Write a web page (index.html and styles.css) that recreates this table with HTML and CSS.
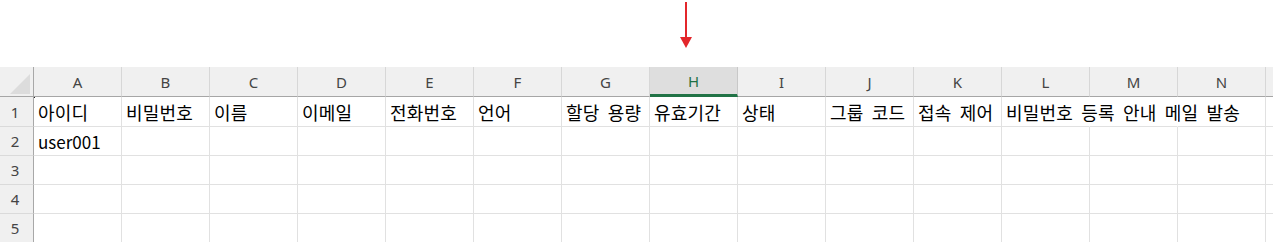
FILE: index.html
```html
<!DOCTYPE html>
<html lang="ko">
<head>
<meta charset="utf-8">
<link rel="stylesheet" href="styles.css">
</head>
<body>
<div class="top">
  <svg class="arrow" width="14" height="50" viewBox="0 0 14 50">
    <rect x="6" y="2" width="2" height="37" fill="#e3262b"/>
    <polygon points="1,37 13,37 7,48" fill="#e3262b"/>
  </svg>
</div>
<div class="sheet">
  <div class="row head">
    <div class="rn corner"><svg width="33" height="29" viewBox="0 0 33 29"><polygon points="30,7 30,27 10,27" fill="#dcdcdc"/></svg></div>
    <div class="c">A</div><div class="c">B</div><div class="c">C</div><div class="c">D</div><div class="c">E</div><div class="c">F</div><div class="c">G</div><div class="c sel">H</div><div class="c">I</div><div class="c">J</div><div class="c">K</div><div class="c">L</div><div class="c">M</div><div class="c">N</div><div class="c rest"></div>
  </div>
  <div class="row r1">
    <div class="rn">1</div>
    <div class="c"><span class="mark"></span>아이디</div><div class="c">비밀번호</div><div class="c">이름</div><div class="c">이메일</div><div class="c">전화번호</div><div class="c">언어</div><div class="c">할당 용량</div><div class="c">유효기간</div><div class="c">상태</div><div class="c">그룹 코드</div><div class="c">접속 제어</div><div class="c nb">비밀번호 등록 안내 메일 발송</div><div class="c nb"></div><div class="c"></div><div class="c rest"></div>
  </div>
  <div class="row">
    <div class="rn">2</div>
    <div class="c"><span class="latin">user001</span></div><div class="c"></div><div class="c"></div><div class="c"></div><div class="c"></div><div class="c"></div><div class="c"></div><div class="c"></div><div class="c"></div><div class="c"></div><div class="c"></div><div class="c"></div><div class="c"></div><div class="c"></div><div class="c rest"></div>
  </div>
  <div class="row">
    <div class="rn">3</div>
    <div class="c"></div><div class="c"></div><div class="c"></div><div class="c"></div><div class="c"></div><div class="c"></div><div class="c"></div><div class="c"></div><div class="c"></div><div class="c"></div><div class="c"></div><div class="c"></div><div class="c"></div><div class="c"></div><div class="c rest"></div>
  </div>
  <div class="row">
    <div class="rn">4</div>
    <div class="c"></div><div class="c"></div><div class="c"></div><div class="c"></div><div class="c"></div><div class="c"></div><div class="c"></div><div class="c"></div><div class="c"></div><div class="c"></div><div class="c"></div><div class="c"></div><div class="c"></div><div class="c"></div><div class="c rest"></div>
  </div>
  <div class="row">
    <div class="rn">5</div>
    <div class="c"></div><div class="c"></div><div class="c"></div><div class="c"></div><div class="c"></div><div class="c"></div><div class="c"></div><div class="c"></div><div class="c"></div><div class="c"></div><div class="c"></div><div class="c"></div><div class="c"></div><div class="c"></div><div class="c rest"></div>
  </div>
</div>
</body>
</html>
```
FILE: styles.css
```css
html, body {
  margin: 0;
  padding: 0;
  background: #ffffff;
  overflow: hidden;
}
body {
  width: 1273px;
  height: 242px;
  font-family: "Noto Sans CJK KR", "Noto Sans", sans-serif;
}
.top {
  height: 67px;
  display: flex;
  align-items: flex-start;
  padding-left: 679px;
  box-sizing: border-box;
}
.arrow {
  display: block;
}
.sheet {
  display: flex;
  flex-direction: column;
}
.row {
  display: flex;
  height: 29px;
  box-sizing: border-box;
}
.row.head {
  height: 30px;
}
.row.r1 {
  height: 30px;
}
.rn {
  width: 34px;
  flex: none;
  box-sizing: border-box;
  background: #f0f0f0;
  border-right: 1px solid #a8a8a8;
  border-bottom: 1px solid #dadada;
  display: flex;
  align-items: center;
  justify-content: center;
  font-family: "Noto Sans", "Open Sans", sans-serif;
  font-size: 15px;
  color: #444444;
  padding-right: 3px;
}
.c {
  width: 88px;
  flex: none;
  box-sizing: border-box;
  border-right: 1px solid #e1e1e1;
  border-bottom: 1px solid #e1e1e1;
  display: flex;
  align-items: center;
  padding-left: 4px;
  font-size: 18px;
  letter-spacing: 0.2px;
  word-spacing: 3px;
  color: #000000;
  white-space: nowrap;
  position: relative;
}
.c.rest {
  flex: 1;
  width: auto;
  border-right: none;
}
.c.nb {
  border-right-color: #ffffff;
}
.latin {
  font-size: 17px;
  letter-spacing: 0;
}
.head .rn,
.head .c {
  background: #f0f0f0;
  border-bottom: 1px solid #a6a6a6;
}
.head .rn {
  padding: 0;
  align-items: stretch;
  justify-content: flex-start;
}
.head .c {
  border-right: 1px solid #d7d7d7;
  justify-content: center;
  padding-left: 0;
  font-family: "Noto Sans", "Open Sans", sans-serif;
  font-size: 15px;
  letter-spacing: 0;
  color: #444444;
}
.head .c.rest {
  border-right: none;
}
.head .c.sel {
  background: #dedede;
  color: #1e7145;
  border-bottom: 3px solid #217346;
  border-right-color: #c8c8c8;
}
.mark {
  position: absolute;
  left: 0;
  top: 0;
  width: 1px;
  height: 1px;
  background: #222222;
}
```
